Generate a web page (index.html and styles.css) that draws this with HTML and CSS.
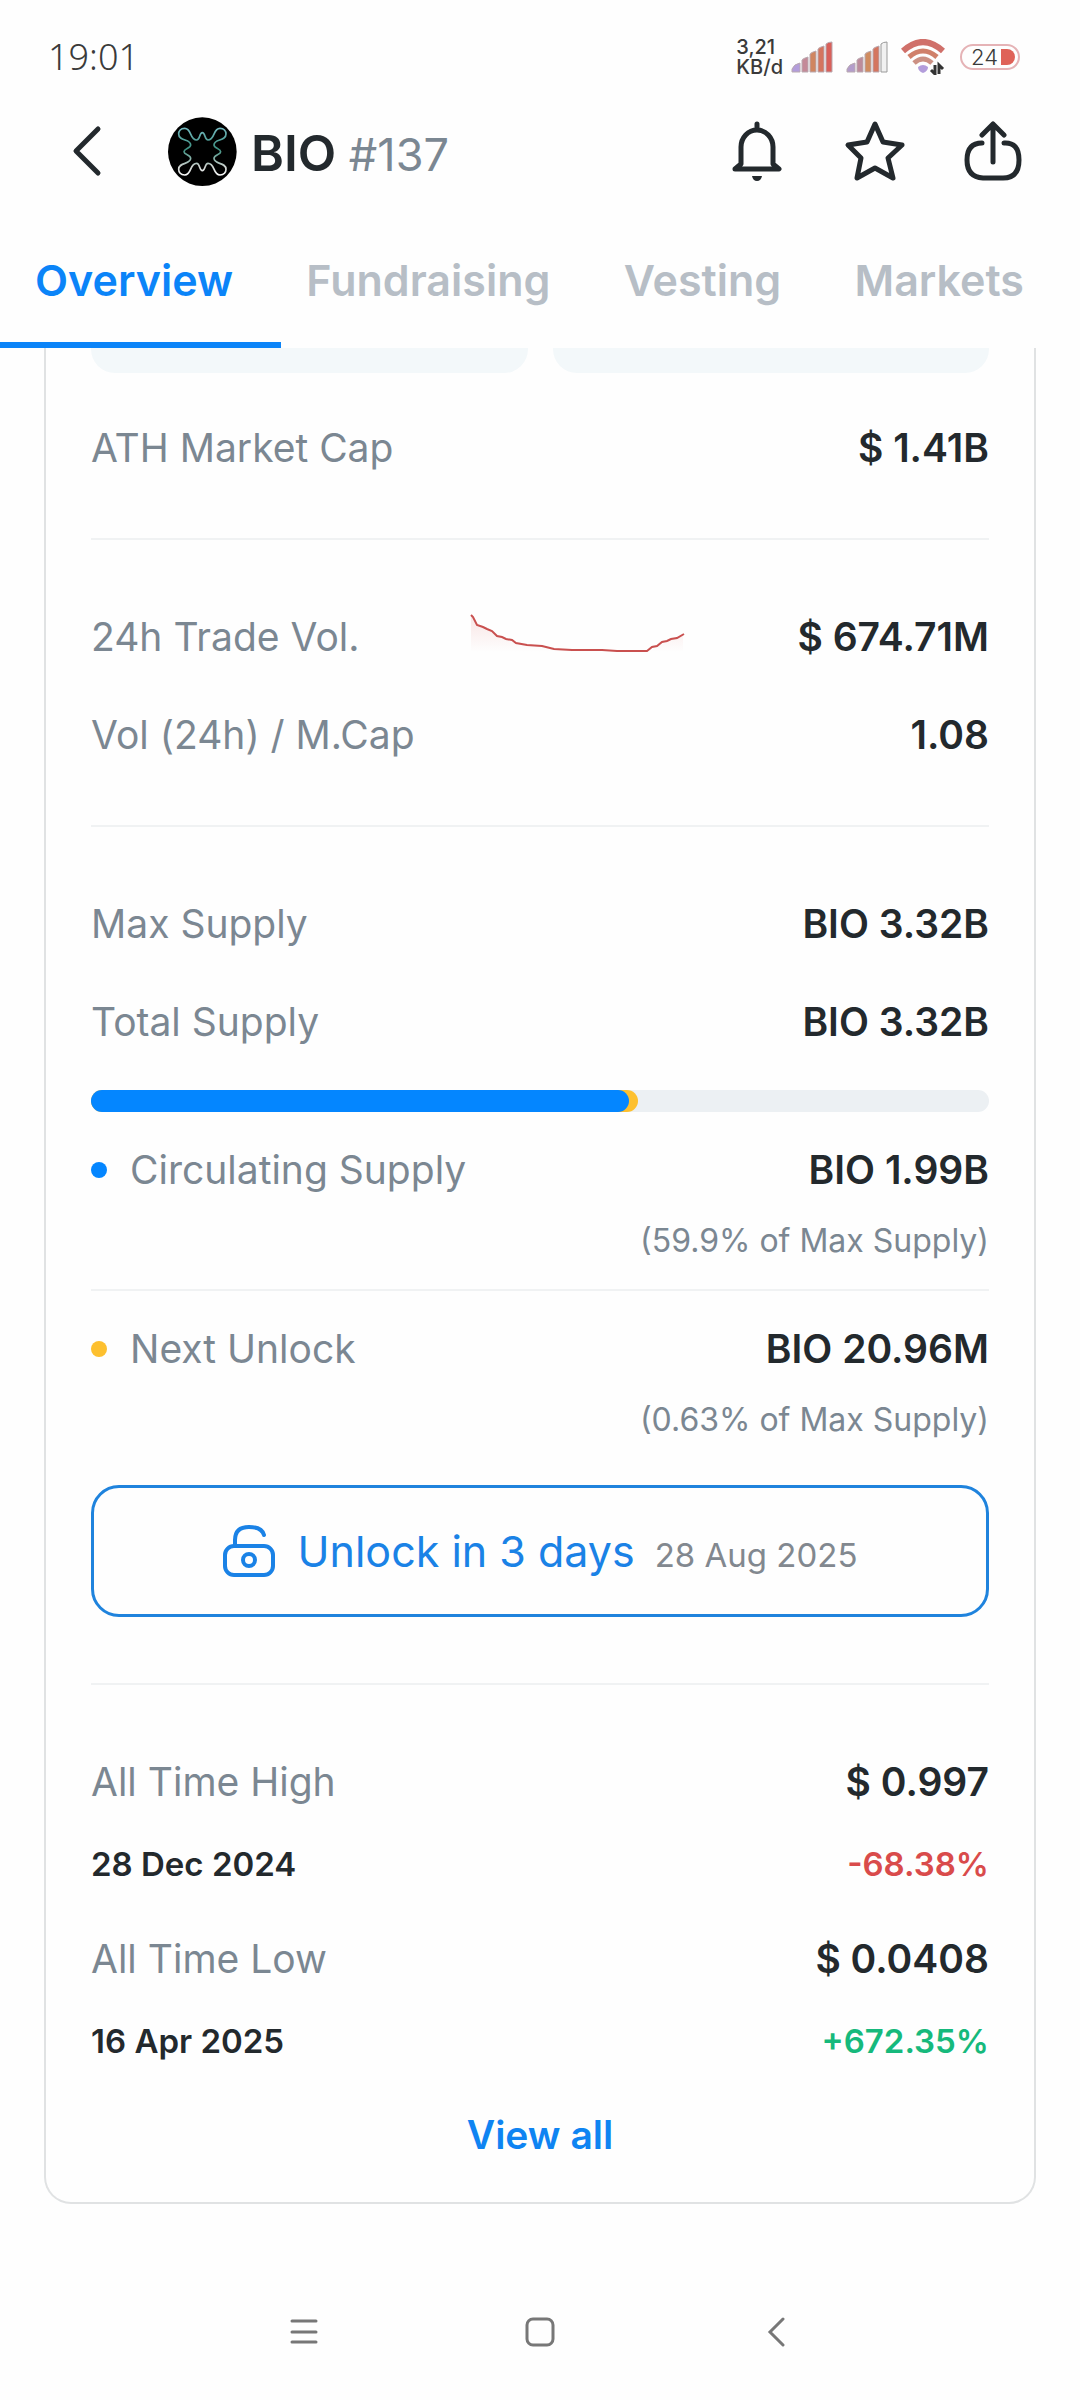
FILE: index.html
```html
<!DOCTYPE html>
<html lang="en">
	<head>
		<meta charset="utf-8">
		<meta name="viewport" content="width=device-width">
		<title>BIO</title>
		<link rel="stylesheet" href="styles.css">
	</head>
	<body>
		<div class="status">
			<span class="clock">19:01</span>
			<span class="speed">3,21<br>KB/d</span>
			<svg class="signal" width="42" height="32" viewBox="0 0 42 32" stroke="#b9a9b0">
				<path fill="#b39ddb" d="M1 31v-3q2-5 8-6v9z"/>
				<path fill="#c48a98" d="M11 31V19q2-2 6-3v15z"/>
				<path fill="#d08560" d="M19 31V13q2-2 6-3v21z"/>
				<path fill="#d4755f" d="M27 31V8q2-2 6-3v26z"/>
				<path fill="#d9605a" d="M35 31V3q2-2 6-2v30z"/>
			</svg>
			<svg class="signal" width="42" height="32" viewBox="0 0 42 32" stroke="#b9a9b0">
				<path fill="#b39dcb" d="M1 31v-3q2-5 8-6v9z"/>
				<path fill="#bd8c9c" d="M11 31V19q2-2 6-3v15z"/>
				<path fill="#d08c60" d="M19 31V13q2-2 6-3v21z"/>
				<path fill="#d4755f" d="M27 31V8q2-2 6-3v26z"/>
				<path fill="#f1f1f1" stroke="#999" d="M35 31V3q2-2 6-2v30z"/>
			</svg>
			<svg class="wifi" width="46" height="36" viewBox="0 0 46 36" fill="none">
				<path stroke="#d0706a" stroke-width="6" d="M2 12q20-18 40 0"/>
				<path stroke="#d0806a" stroke-width="5" d="M8 18q14-12 28 0"/>
				<path stroke="#cc9184" stroke-width="5" d="M13 24q9-8 18 0"/>
				<path fill="#b39ddb" d="M17 28q5-4 10 0q0 4-5 6q-5-2-5-6z"/>
				<path stroke="#333" stroke-width="3" d="M34 26v9l-4-4M38 35v-9l4 4"/>
			</svg>
			<span class="battery">24<i class="charge"></i></span>
		</div>

		<header class="header">
			<button class="icon-btn back" aria-label="Back">
				<svg width="32" height="54" viewBox="0 0 32 54"><path d="M28 5L6 27l22 22"/></svg>
			</button>
			<svg class="logo" viewBox="54 48 207 207">
				<defs>
					<linearGradient id="glow" gradientUnits="userSpaceOnUse" x1="0" y1="80" x2="0" y2="225">
						<stop offset="0" stop-color="#74b8bf"/>
						<stop offset="0.45" stop-color="#3c8f80"/>
						<stop offset="0.8" stop-color="#c9cfcc"/>
						<stop offset="1" stop-color="#fff"/>
					</linearGradient>
				</defs>
				<circle cx="157" cy="152" r="103"/>
				<path fill="none" stroke="url(#glow)" stroke-width="5" d="M157 95C166 95 164 117 174 117C196 117 188 82 210 82C222 82 228 90 228 99C228 122 192 112 192 132C192 142 212 143 212 152C212 161 192 162 192 172C192 192 228 182 228 205C228 214 222 222 210 222C188 222 196 187 174 187C164 187 166 209 157 209C148 209 150 187 140 187C118 187 126 222 104 222C92 222 86 214 86 205C86 182 122 192 122 172C122 162 102 161 102 152C102 143 122 142 122 132C122 112 86 122 86 99C86 90 92 82 104 82C126 82 118 117 140 117C150 117 148 95 157 95Z"/>
			</svg>
			<h1 class="name">BIO <span class="rank">#137</span></h1>
			<button class="icon-btn" aria-label="Alerts">
				<svg width="62" height="64" viewBox="0 0 62 64">
					<path d="M31 5v5M15 45V28a16 17 0 0 1 32 0v17l6 5H9z"/>
					<path class="solid" d="M26 57h10q-1 5-5 5t-5-5z"/>
				</svg>
			</button>
			<button class="icon-btn" aria-label="Favourite">
				<svg width="62" height="64" viewBox="0 0 62 64">
					<path d="M31 5l8 18 19 3-14 13 5 20-18-10-18 10 4-20L4 26l19-3z"/>
				</svg>
			</button>
			<button class="icon-btn" aria-label="Share">
				<svg width="62" height="64" viewBox="0 0 62 64">
					<path d="M31 43V5M20 16L31 5l11 11M20 24Q5 24 5 41t16 18h20q16 0 16-18T42 24"/>
				</svg>
			</button>
		</header>

		<nav class="tabs">
			<a class="tab active" href="#overview">Overview</a>
			<a class="tab" href="#fundraising">Fundraising</a>
			<a class="tab" href="#vesting">Vesting</a>
			<a class="tab" href="#markets">Markets</a>
		</nav>

		<main class="content" id="overview">
			<div class="card">
				<div class="tiles">
					<div class="tile"></div>
					<div class="tile"></div>
				</div>

				<section class="group">
					<div class="row"><span class="label">ATH Market Cap</span><b class="value">$ 1.41B</b></div>
				</section>

				<section class="group">
					<div class="row">
						<span class="label">24h Trade Vol.</span>
						<svg class="spark" width="216" height="50" viewBox="0 0 216 50">
							<defs>
								<linearGradient id="fade" x1="0" y1="0" x2="0" y2="1">
									<stop offset="0" stop-color="#d9534f" stop-opacity="0.15"/>
									<stop offset="1" stop-color="#d9534f" stop-opacity="0"/>
								</linearGradient>
							</defs>
							<path fill="url(#fade)" d="M1 3L7 13 22 19 27 24 47 31 87 37 102 38 147 40H1zM177 40L187 34 197 30 213 22V40z"/>
							<path fill="none" stroke="#c9504f" stroke-width="2" d="M1 3L3 5 7 13 13 15 17 17 22 19 27 24 32 25 36 27 42 28 46 31 57 33 72 34 84 37 102 38 132 38 147 39H177L182 35 187 34 192 30 197 29 201 27 207 26 214 22"/>
						</svg>
						<b class="value">$ 674.71M</b>
					</div>
					<div class="row"><span class="label">Vol (24h) / M.Cap</span><b class="value">1.08</b></div>
				</section>

				<section class="group supply">
					<div class="row"><span class="label">Max Supply</span><b class="value">BIO 3.32B</b></div>
					<div class="row"><span class="label">Total Supply</span><b class="value">BIO 3.32B</b></div>
					<div class="bar">
						<div class="fill next" style="width: 60.9%"></div>
						<div class="fill circulating" style="width: 59.9%"></div>
					</div>
					<div class="part">
						<div class="row"><span class="label dot blue">Circulating Supply</span><b class="value">BIO 1.99B</b></div>
						<p class="share">(59.9% of Max Supply)</p>
					</div>
					<div class="part">
						<div class="row"><span class="label dot yellow">Next Unlock</span><b class="value">BIO 20.96M</b></div>
						<p class="share">(0.63% of Max Supply)</p>
					</div>
					<button class="unlock">
						<svg width="52" height="52" viewBox="0 0 52 52">
							<rect x="2" y="21" width="48" height="29" rx="9"/>
							<path d="M12 21v-6Q12 2 26 2q13 0 15 8"/>
							<circle cx="26" cy="35" r="6"/>
						</svg>
						<span class="unlock-text">Unlock in 3 days<small class="when">28 Aug 2025</small></span>
					</button>
				</section>

				<section class="group records">
					<div class="row"><span class="label">All Time High</span><b class="value">$ 0.997</b></div>
					<div class="row record"><time>28 Dec 2024</time><b class="down">-68.38%</b></div>
					<div class="row"><span class="label">All Time Low</span><b class="value">$ 0.0408</b></div>
					<div class="row record"><time>16 Apr 2025</time><b class="up">+672.35%</b></div>
				</section>

				<a class="view-all" href="#all">View all</a>
			</div>
		</main>

		<footer class="sysnav">
			<button class="sys-btn" aria-label="Recent apps">
				<svg width="30" height="30" viewBox="0 0 30 30"><path d="M3 4h24M3 15h24M3 25h24"/></svg>
			</button>
			<button class="sys-btn" aria-label="Home">
				<svg width="30" height="30" viewBox="0 0 30 30"><rect x="2" y="2" width="26" height="26" rx="6"/></svg>
			</button>
			<button class="sys-btn" aria-label="Back">
				<svg width="30" height="30" viewBox="0 0 30 30"><path d="M22 2L9 15l13 13"/></svg>
			</button>
		</footer>
	</body>
</html>
```

FILE: styles.css
```css
* {
	box-sizing: border-box;
}

body {
	margin: 0;
	min-height: 100vh;
	display: flex;
	flex-direction: column;
	background: #fefefe;
	color: #23292d;
	font-family: Inter, "Liberation Sans", sans-serif;
	font-size: 39px;
	line-height: 48px;
}

button {
	padding: 0;
	border: none;
	background: none;
	color: inherit;
	font: inherit;
}
a {
	text-decoration: none;
}
b {
	font-weight: 600;
}

/* status bar */
.status {
	display: flex;
	align-items: center;
	height: 94px;
	padding: 20px 60px 0 48px;
	color: #3a3a3a;
}
.clock {
	flex: 1;
	font-family: "Noto Sans", sans-serif;
	font-size: 36px;
	font-weight: 300;
}
.speed {
	margin-right: 8px;
	font-size: 20px;
	font-weight: 500;
	line-height: 20px;
}
.signal {
	margin-right: 13px;
}
.wifi {
	margin-right: 13px;
}
.battery {
	display: flex;
	align-items: center;
	justify-content: flex-end;
	gap: 3px;
	width: 60px;
	height: 26px;
	padding-right: 3px;
	border: 2px solid #e5b3b6;
	border-radius: 13px;
	font-size: 22px;
	font-weight: 300;
}
.charge {
	width: 14px;
	height: 16px;
	border-radius: 0 8px 8px 0;
	background: #df6258;
}

/* coin header */
.header {
	display: flex;
	align-items: center;
	gap: 56px;
	height: 114px;
	padding: 0 56px 0 70px;
}
.icon-btn svg {
	display: block;
	fill: none;
	stroke: #23292d;
	stroke-width: 5;
	stroke-linecap: round;
	stroke-linejoin: round;
}
.icon-btn .solid {
	fill: #23292d;
	stroke: none;
}
.logo {
	width: 69px;
	height: 69px;
	margin: 0 -42px 0 10px;
}
.name {
	flex: 1;
	margin: 0;
	padding-top: 6px;
	font-size: 50px;
	font-weight: 600;
}
.rank {
	color: #7b8792;
	font-size: 45px;
	font-weight: 400;
}

/* tabs */
.tabs {
	display: flex;
	justify-content: space-between;
	height: 140px;
	padding-right: 56px;
}
.tab {
	color: #b7bec6;
	font-size: 43px;
	font-weight: 600;
	line-height: 145px;
}
.tab.active {
	padding: 0 48px 0 35px;
	margin-right: -48px;
	border-bottom: 6px solid #0b84f8;
	color: #0b84f8;
}

/* overview card */
.content {
	flex: 1;
	padding: 0 44px;
}
.card {
	padding: 0 45px 43px;
	border: 2px solid #e0e2e3;
	border-top: none;
	border-radius: 0 0 27px 27px;
}
.tiles {
	display: flex;
	gap: 25px;
}
.tile {
	flex: 1;
	height: 25px;
	border-radius: 0 0 24px 24px;
	background: #f3f8fa;
}

.group {
	padding: 48px 0 41px;
	border-bottom: 2px solid #f0f2f3;
}
.tiles + .group {
	padding-top: 26px;
}
.row {
	display: flex;
	align-items: center;
	justify-content: space-between;
	height: 98px;
	padding-bottom: 1px;
}
.label {
	color: #7b8792;
}
.value {
	font-weight: 600;
}

.supply {
	padding-bottom: 66px;
}
.bar {
	position: relative;
	height: 22px;
	margin: 19px 0 23px;
	border-radius: 11px;
	background: #ecf0f3;
}
.fill {
	position: absolute;
	top: 0;
	left: 0;
	height: 100%;
	border-radius: 11px;
}
.circulating, .blue::before {
	background: #0486ff;
}
.next, .yellow::before {
	background: #fdc02f;
}
.dot {
	display: flex;
	align-items: center;
	gap: 23px;
}
.dot::before {
	content: "";
	width: 16px;
	height: 16px;
	border-radius: 50%;
}
.part .row {
	height: 70px;
}
.part + .part {
	padding-top: 23px;
	border-top: 2px solid #f0f2f3;
}
.share {
	margin: 0;
	height: 84px;
	color: #7b8792;
	font-size: 32px;
	line-height: 72px;
	text-align: right;
}
.unlock {
	display: flex;
	align-items: center;
	justify-content: center;
	width: 100%;
	height: 132px;
	margin-top: 17px;
	border: 3px solid #1f83dd;
	border-radius: 28px;
	color: #1a82e6;
	font-size: 43px;
}
.unlock svg {
	margin-right: 23px;
	fill: none;
	stroke: #1a82e6;
	stroke-width: 4;
	stroke-linecap: round;
}
.unlock-text {
	padding-top: 4px;
}
.when {
	margin-left: 20px;
	color: #82888f;
	font-size: 33px;
}

.records {
	padding-bottom: 0;
	border: none;
}
.record {
	height: 66px;
	margin-bottom: 13px;
	font-size: 33px;
	font-weight: 600;
}
.up {
	color: #16b97c;
}
.down {
	color: #d94b4b;
}
.view-all {
	display: block;
	padding-top: 24px;
	color: #0f84f2;
	font-weight: 600;
	text-align: center;
}

/* system navigation */
.sysnav {
	display: flex;
	justify-content: center;
	gap: 206px;
	padding-bottom: 53px;
}
.sys-btn svg {
	display: block;
	fill: none;
	stroke: #777;
	stroke-width: 3;
	stroke-linecap: round;
}
```
